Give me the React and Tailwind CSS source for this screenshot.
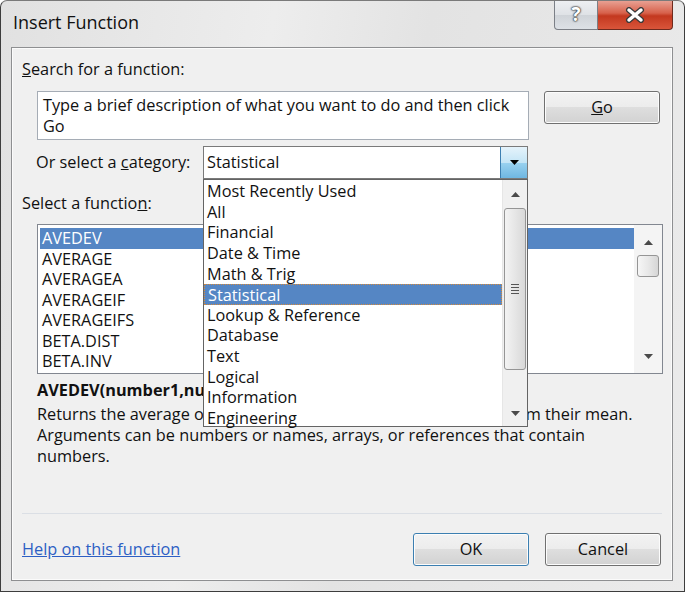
import React from 'react'

const CATEGORIES = ['Most Recently Used', 'All', 'Financial', 'Date & Time', 'Math & Trig', 'Statistical', 'Lookup & Reference', 'Database', 'Text', 'Logical', 'Information', 'Engineering']
const FUNCTIONS = ['AVEDEV', 'AVERAGE', 'AVERAGEA', 'AVERAGEIF', 'AVERAGEIFS', 'BETA.DIST', 'BETA.INV']

const font = { fontFamily: '"Open Sans", "Noto Sans", sans-serif' }

function Tri({ down, className }) {
  return (
    <svg width="9" height="5" viewBox="0 0 9 5" className={className}>
      {down ? <path d="M0 0 L9 0 L4.5 5 Z" fill="currentColor" /> : <path d="M0 5 L9 5 L4.5 0 Z" fill="currentColor" />}
    </svg>
  )
}

function WinButton({ children, primary, className = '' }) {
  return (
    <button
      className={`h-[33px] w-[116px] rounded-[3px] border text-[16.3px] text-[#111] bg-[linear-gradient(#f3f3f3,#ececec_48%,#dedede_50%,#d2d2d2)] shadow-[inset_0_0_0_1px_#fcfcfc] ${primary ? 'border-[#3c7fb1] shadow-[inset_0_0_0_1px_#9fd5f5,inset_0_0_0_2px_#d3ecfa]' : 'border-[#707070]'} ${className}`}
    >
      {children}
    </button>
  )
}

export default function App() {
  return (
    <div style={font} className="w-[685px] h-[592px] flex flex-col overflow-hidden rounded-t-[7px] border border-[#3d3d3d] border-t-[#7a7a7a] bg-[linear-gradient(100deg,#e1e1e1,#ededed_35%,#e3e3e3_55%,#ebebeb)]">
      {/* title bar */}
      <div className="h-[46px] flex justify-between shrink-0">
        <div className="pl-[12px] pt-[8px] text-[18px] text-[#111]">Insert Function</div>
        <div className="flex mr-[11px] h-[30px] -mt-px">
          <div className="w-[44px] h-full flex items-center justify-center rounded-bl-[4px] border border-t-0 border-[#7b7f86] bg-[linear-gradient(#eef0f3,#dfe2e6_50%,#cfd3d8_52%,#dde1e6)]">
            <span className="text-[19px] font-bold text-white leading-none [text-shadow:0_0_1px_#333,0_0_2px_#333,0_0_2px_#333]">?</span>
          </div>
          <div className="w-[75px] h-full flex items-center justify-center rounded-br-[4px] border border-l-0 border-t-0 border-[#6d2a1e] bg-[linear-gradient(#e9a598,#d7614b_45%,#c3381f_55%,#d9553a)]">
            <svg width="22" height="16" viewBox="0 0 22 16">
              <path d="M5 3 L17 13 M17 3 L5 13" stroke="#3a3a3a" strokeWidth="6" strokeLinecap="round" />
              <path d="M5 3 L17 13 M17 3 L5 13" stroke="#ffffff" strokeWidth="3.5" strokeLinecap="round" />
            </svg>
          </div>
        </div>
      </div>

      {/* client area */}
      <div className="ml-[10px] w-[662px] h-[534px] border border-[#8e8f91] bg-[#f0f0f0] shadow-[inset_0_0_0_1px_#fbfbfb] text-[16.3px] text-[#111] flex flex-col">
        <div className="mt-[10px] ml-[10px] leading-[22px]"><span className="underline">S</span>earch for a function:</div>

        <div className="mt-[11px] ml-[25px] flex items-start gap-[15px]">
          <div className="w-[492px] h-[49px] border border-[#a5acb5] bg-white px-[5px] leading-[21px] pt-[3px]">
            Type a brief description of what you want to do and then click Go
          </div>
          <WinButton><span className="underline">G</span>o</WinButton>
        </div>

        <div className="mt-[6px] ml-[24px] flex items-center">
          <div className="w-[167px]">Or select a <span className="underline">c</span>ategory:</div>
          <div className="relative w-[325px] h-[33px] border border-[#7a7a7a] bg-white flex items-center">
            <span className="pl-[3px] flex-1">Statistical</span>
            <div className="w-[27px] h-full border-l border-[#3c7fb1] bg-[linear-gradient(#e5f3fb,#c4e5f6_50%,#98d1ef_52%,#6fb7e2)] flex items-center justify-center text-black">
              <Tri down />
            </div>

            {/* open dropdown */}
            <div className="absolute left-[-1px] top-[32px] z-10 w-[325px] h-[248px] border border-[#646464] bg-white flex">
              <div className="flex-1 pt-px">
                {CATEGORIES.map(c => (
                  <div key={c} className={`h-[20.64px] leading-[20.64px] pl-[3px] whitespace-nowrap ${c === 'Statistical' ? 'bg-[#5586c4] text-white border border-dotted border-[#d68a3c] leading-[18.64px] pl-[2px]' : ''}`}>{c}</div>
                ))}
              </div>
              <div className="w-[25px] flex flex-col items-center bg-[#f0f0f0] border-l border-[#e6e6e6]">
                <div className="h-[28px] flex items-center justify-center text-[#4a4a4a]"><Tri /></div>
                <div className="w-[22px] h-[162px] rounded-[3px] border border-[#959595] bg-[linear-gradient(90deg,#f3f3f3,#e6e6e6_50%,#d8d8d8)] flex flex-col items-center justify-center gap-[2px]">
                  <div className="w-[8px] h-px bg-[#555]" />
                  <div className="w-[8px] h-px bg-[#555]" />
                  <div className="w-[8px] h-px bg-[#555]" />
                  <div className="w-[8px] h-px bg-[#555]" />
                </div>
                <div className="flex-1 flex items-end justify-center pb-[10px] text-[#4a4a4a]"><Tri down /></div>
              </div>
            </div>
          </div>
        </div>

        <div className="mt-[13px] ml-[10px] leading-[22px]">Select a functio<span className="underline">n</span>:</div>

        <div className="mt-[10px] ml-[25px] w-[626px] h-[150px] border border-[#828790] bg-white flex">
          <div className="flex-1 pl-[2px] pt-[3px]">
            {FUNCTIONS.map((f, i) => (
              <div key={f} className={`h-[20.5px] leading-[20.5px] pl-[2px] ${i === 0 ? 'bg-[#5586c4] text-white' : ''}`}>{f}</div>
            ))}
          </div>
          <div className="w-[28px] flex flex-col items-center bg-[#f4f4f4]">
            <div className="h-[30px] flex items-center justify-center text-[#4a4a4a] pt-[4px]"><Tri /></div>
            <div className="w-[22px] h-[22px] rounded-[3px] border border-[#959595] bg-[linear-gradient(90deg,#f6f6f6,#e8e8e8_50%,#d6d6d6)]" />
            <div className="flex-1 flex items-end justify-center pb-[14px] text-[#4a4a4a]"><Tri down /></div>
          </div>
        </div>

        <div className="mt-[5px] ml-[25px] leading-[22px] font-bold">AVEDEV(number1,number2,...)</div>
        <div className="mt-[3px] ml-[25px] w-[608px] leading-[21px]">
          Returns the average of the absolute deviations of data points from their mean. Arguments can be numbers or names, arrays, or references that contain numbers.
        </div>

        <div className="mt-auto ml-[10px] w-[640px] h-px bg-[#dbdfe5]" />
        <div className="mt-[19px] mb-[14px] ml-[10px] mr-[11px] flex items-center">
          <a className="flex-1 text-[#2d5fc4] underline cursor-pointer">Help on this function</a>
          <WinButton primary>OK</WinButton>
          <WinButton className="ml-[16px]">Cancel</WinButton>
        </div>
      </div>
    </div>
  )
}
